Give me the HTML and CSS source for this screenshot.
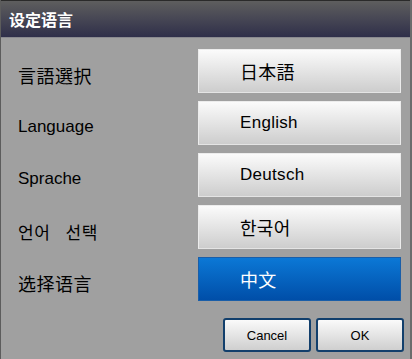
FILE: index.html
```html
<!DOCTYPE html>
<html>
<head>
<meta charset="utf-8">
<link rel="stylesheet" href="styles.css">
</head>
<body>
<div class="dialog">
  <div class="titlebar" lang="zh-CN">设定语言</div>
  <div class="content">
    <div class="rows">
      <div class="label cjk" lang="ja">言語選択</div>
      <div class="btn cjk" lang="ja">日本語</div>
      <div class="label">Language</div>
      <div class="btn">English</div>
      <div class="label">Sprache</div>
      <div class="btn">Deutsch</div>
      <div class="label cjk ko" lang="ko">언어 선택</div>
      <div class="btn cjk" lang="ko">한국어</div>
      <div class="label cjk sc" lang="zh-CN">选择语言</div>
      <div class="btn cjk sc selected" lang="zh-CN">中文</div>
    </div>
    <div class="actions">
      <div class="action">Cancel</div>
      <div class="action">OK</div>
    </div>
  </div>
</div>
</body>
</html>
```
FILE: styles.css
```css
html, body {
  margin: 0;
  padding: 0;
  background: #a0a0a0;
}
body {
  font-family: "Liberation Sans", "Noto Sans CJK JP", sans-serif;
}
.dialog {
  width: 412px;
  height: 359px;
  box-sizing: border-box;
  border-left: 1px solid #5c5c5c;
  border-right: 2px solid #6c6c6c;
  background: #a0a0a0;
  display: flex;
  flex-direction: column;
}
.titlebar {
  height: 36px;
  border-top: 1px solid #2a2a2a;
  border-bottom: 1px solid #8a8a90;
  background: linear-gradient(#5e5e5e, #2f2f4a);
  color: #ffffff;
  font-family: "Noto Sans CJK SC", sans-serif;
  font-size: 16px;
  font-weight: bold;
  line-height: 36px;
  padding-left: 8px;
}
.content {
  flex: 1;
  display: flex;
  flex-direction: column;
  padding: 11px 0 0 16px;
}
.rows {
  display: grid;
  grid-template-columns: 181px 203px;
  grid-auto-rows: 44px;
  row-gap: 8px;
}
.label {
  color: #000;
  font-size: 17px;
  display: flex;
  align-items: center;
  padding-top: 8px;
  padding-left: 1px;
}
.cjk {
  font-family: "Noto Sans CJK JP", sans-serif;
  font-size: 18px;
  letter-spacing: 0.5px;
}
.cjk.sc {
  font-family: "Noto Sans CJK SC", sans-serif;
}
.cjk.ko {
  font-family: "Noto Sans CJK KR", sans-serif;
  font-size: 17px;
  word-spacing: 10px;
}
.btn {
  box-sizing: border-box;
  border: 1px solid #ececec;
  border-bottom-color: #e4e4e4;
  background: linear-gradient(#fbfbfb, #cdcdcd);
  font-size: 17px;
  color: #000;
  display: flex;
  align-items: center;
  padding-left: 41px;
  letter-spacing: 0.3px;
}
.btn.cjk {
  font-size: 18px;
}
.btn.selected {
  border-color: #1a5ea8;
  background: linear-gradient(#0b78d6, #004ea8);
  color: #ffffff;
}
.actions {
  display: flex;
  justify-content: flex-end;
  gap: 5px;
  margin-top: 17px;
  padding-right: 6px;
}
.action {
  width: 88px;
  height: 34px;
  box-sizing: border-box;
  border: 2px solid #123f6c;
  border-radius: 3px;
  background: linear-gradient(#fafafa, #cfcfcf);
  font-size: 13px;
  color: #000;
  display: flex;
  align-items: center;
  justify-content: center;
}
```
